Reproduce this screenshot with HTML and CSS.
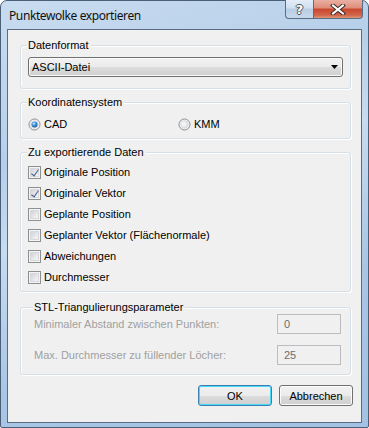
FILE: index.html
```html
<!DOCTYPE html>
<html lang="de">
  <head>
    <meta charset="UTF-8" />
    <meta name="viewport" content="width=device-width, initial-scale=1.0" />
    <title>Punktewolke exportieren</title>
    <link rel="stylesheet" href="styles.css">
  </head>
  <body>
    <div class="window">
      <!-- Title bar -->
      <div class="titlebar">
        <span class="title">Punktewolke exportieren</span>
        <div class="caption">
          <span class="cap help">?</span>
          <span class="cap close">
            <svg width="16" height="11" viewBox="0 0 16 11">
              <path d="M3 1.5 L13 9.5 M13 1.5 L3 9.5" stroke="#3b2a28" stroke-width="4" stroke-linecap="square" />
              <path d="M3 1.5 L13 9.5 M13 1.5 L3 9.5" stroke="#fff" stroke-width="2" stroke-linecap="square" />
            </svg>
          </span>
        </div>
      </div>

      <div class="client">
        <!-- Datenformat -->
        <div class="group g-format">
          <div class="group-title">Datenformat</div>
          <div class="combo">
            <span>ASCII-Datei</span>
            <svg width="7" height="4" viewBox="0 0 7 4"><path d="M0 0 H7 L3.5 4 Z" fill="#000" /></svg>
          </div>
        </div>

        <!-- Koordinatensystem -->
        <div class="group g-coords">
          <div class="group-title">Koordinatensystem</div>
          <div class="radio-row">
            <label class="option">
              <svg class="box" width="13" height="13" viewBox="0 0 13 13">
                <defs>
                  <radialGradient id="dot" cx="0.4" cy="0.35" r="0.7">
                    <stop offset="0" stop-color="#c7e6ff" />
                    <stop offset="0.5" stop-color="#3f8fd8" />
                    <stop offset="1" stop-color="#1b4f8c" />
                  </radialGradient>
                </defs>
                <circle cx="6.5" cy="6.5" r="5.5" fill="#f4f4f4" stroke="#8b8d90" />
                <circle cx="6.5" cy="6.5" r="4.2" fill="#dfe3e8" />
                <circle cx="6.5" cy="6.5" r="3" fill="url(#dot)" />
              </svg>
              CAD
            </label>
            <label class="option">
              <svg class="box" width="13" height="13" viewBox="0 0 13 13">
                <circle cx="6.5" cy="6.5" r="5.5" fill="#f4f4f4" stroke="#8b8d90" />
                <circle cx="6.5" cy="6.5" r="4.2" fill="#dcdfe3" />
                <circle cx="6" cy="6" r="2.6" fill="#f2f3f4" />
              </svg>
              KMM
            </label>
          </div>
        </div>

        <!-- Zu exportierende Daten -->
        <div class="group g-data">
          <div class="group-title">Zu exportierende Daten</div>
          <div class="checks">
            <label class="option"><span class="check on"></span>Originale Position</label>
            <label class="option"><span class="check on"></span>Originaler Vektor</label>
            <label class="option"><span class="check"></span>Geplante Position</label>
            <label class="option"><span class="check"></span>Geplanter Vektor (Flächenormale)</label>
            <label class="option"><span class="check"></span>Abweichungen</label>
            <label class="option"><span class="check"></span>Durchmesser</label>
          </div>
        </div>

        <!-- STL -->
        <div class="group g-stl">
          <div class="group-title">STL-Triangulierungsparameter</div>
          <div class="field">
            <span>Minimaler Abstand zwischen Punkten:</span>
            <span class="input">0</span>
          </div>
          <div class="field">
            <span>Max. Durchmesser zu füllender Löcher:</span>
            <span class="input">25</span>
          </div>
        </div>

        <div class="buttons">
          <button class="btn default">OK</button>
          <button class="btn">Abbrechen</button>
        </div>
      </div>
    </div>
  </body>
</html>
```

FILE: styles.css
```css
* {
  margin: 0;
  padding: 0;
  box-sizing: border-box;
}

body {
  background: #fff;
  font-family: "Liberation Sans", Arial, sans-serif;
  font-size: 11px;
  color: #000;
}

/* Window frame */
.window {
  width: 369px;
  height: 428px;
  display: flex;
  flex-direction: column;
  padding: 0 6px 4px;
  border: 1px solid #4a5f78;
  border-radius: 7px 7px 2px 2px;
  background: linear-gradient(160deg, #c9dcf0 0%, #b6cfe9 30%, #c8dbef 45%, #a9c6e5 70%, #a3c1e2 100%);
}

.titlebar {
  height: 28px;
  display: flex;
  justify-content: space-between;
  align-items: flex-start;
}

.title {
  font-family: "Noto Sans", sans-serif;
  font-size: 12px;
  line-height: 16px;
  padding: 7px 0 0 2px;
  color: #111;
  letter-spacing: -0.4px;
}

.caption {
  display: flex;
  margin: -1px -6px 0 0;
  padding-right: 5px;
}

.cap {
  height: 19px;
  display: flex;
  justify-content: center;
  align-items: center;
  border: 1px solid #5a6d85;
  border-top: none;
}

.help {
  width: 28px;
  border-right: none;
  border-radius: 0 0 0 4px;
  background: linear-gradient(#e4edf7, #d1dff0 45%, #b8cce3 50%, #c7d8ea);
  color: #fff;
  font-family: "DejaVu Sans", sans-serif;
  font-weight: bold;
  font-size: 13px;
  text-shadow: 1px 0 0 #4b5563, -1px 0 0 #4b5563, 0 1px 0 #4b5563, 0 -1px 0 #4b5563;
}

.close {
  width: 50px;
  border-radius: 0 0 4px 0;
  background: linear-gradient(#eab0a2, #dd8c78 45%, #c8462f 50%, #d2664b 85%, #e0987c);
}

/* Client area */
.client {
  flex: 1;
  display: flex;
  flex-direction: column;
  background: #f0f0f0;
  border: 1px solid #5b6c80;
  padding: 0 10px 0 12px;
}

.group {
  border: 1px solid #d5dfe5;
  border-radius: 3px;
  box-shadow: inset 1px 1px 0 #fff, 1px 1px 0 #fff;
  padding: 0 7px;
}

.group-title {
  width: fit-content;
  height: 13px;
  line-height: 13px;
  margin: -7px 0 0 -1px;
  padding: 0 2px 0 1px;
  background: #f0f0f0;
  color: #000;
}

.g-format {
  margin-top: 15px;
  padding-bottom: 11px;
}

.g-coords {
  margin-top: 13px;
  padding-bottom: 7px;
}

.g-data {
  margin-top: 13px;
  padding-bottom: 7px;
}

.g-stl {
  margin-top: 15px;
  padding: 0 9px 9px 13px;
}

/* Combo box */
.combo {
  height: 20px;
  margin-top: 5px;
  display: flex;
  justify-content: space-between;
  align-items: center;
  padding: 0 4px 0 3px;
  border: 1px solid #707070;
  border-radius: 3px;
  background: linear-gradient(#f2f2f2, #ebebeb 50%, #dddddd 51%, #cfcfcf);
  box-shadow: inset 0 0 0 1px #fafafa;
}

/* Options */
.option {
  display: flex;
  align-items: center;
  gap: 3px;
  height: 13px;
  line-height: 13px;
}

.radio-row {
  display: grid;
  grid-template-columns: 150px 1fr;
  margin-top: 9px;
}

.checks {
  display: flex;
  flex-direction: column;
  gap: 8px;
  margin-top: 7px;
}

.check {
  width: 13px;
  height: 13px;
  border: 1px solid #8e8f8f;
  background: #f4f4f4;
  position: relative;
}

.check::before {
  content: "";
  position: absolute;
  inset: 1px;
  border: 1px solid #d6d8dc;
  background: linear-gradient(135deg, #d0d3d8, #f7f7f7);
}

.check.on::after {
  content: "";
  position: absolute;
  left: 4px;
  top: 1px;
  width: 3px;
  height: 7px;
  border: solid #4c5f8f;
  border-width: 0 1.6px 1.6px 0;
  transform: rotate(35deg);
}

/* Disabled fields */
.field {
  display: flex;
  justify-content: space-between;
  align-items: center;
  color: #a0a0a0;
}

.field + .field {
  margin-top: 11px;
}

.g-stl .field:first-of-type {
  margin-top: 4px;
}

.input {
  width: 64px;
  height: 20px;
  line-height: 18px;
  padding-left: 6px;
  border: 1px solid #b9bdc1;
  background: #f0f0f0;
  color: #6d6d6d;
}

/* Buttons */
.buttons {
  display: flex;
  justify-content: flex-end;
  gap: 7px;
  margin: 10px -2px 0 0;
}

.btn {
  width: 74px;
  height: 21px;
  font-family: inherit;
  font-size: 11px;
  color: #000;
  border: 1px solid #707070;
  border-radius: 3px;
  background: linear-gradient(#f2f2f2, #ebebeb 50%, #dddddd 51%, #cfcfcf);
  box-shadow: inset 0 0 0 1px #fbfbfb;
}

.btn.default {
  border-color: #3c7fb1;
  box-shadow: inset 0 0 0 1px #48d8fb;
}
```
